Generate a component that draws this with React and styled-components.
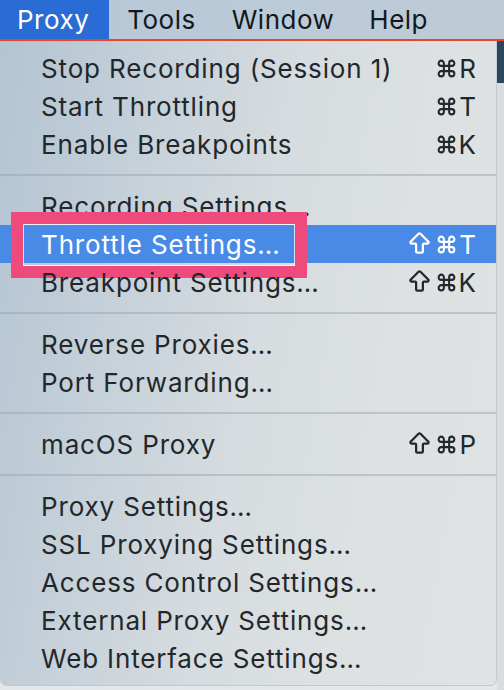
import React from "react";
import styled, { createGlobalStyle } from "styled-components";
import { Command, ArrowBigUp } from "lucide-react";

const Global = createGlobalStyle`
  html, body { margin: 0; padding: 0; }
  body { background: #e4e7e9; font-family: Inter, "Noto Sans", "DejaVu Sans", sans-serif; }
`;

const Page = styled.div`
  width: 504px;
  height: 690px;
  overflow: hidden;
  display: flex;
  flex-direction: column;
  background: #e4e7e9;
`;

const MenuBar = styled.div`
  height: 39px;
  flex: none;
  display: flex;
  align-items: stretch;
  background: linear-gradient(90deg, #b4c6d6 0%, #bccbd8 60%, #bdcad6 100%);
  border-bottom: 2px solid #e8452f;
`;

const MenuTitle = styled.div`
  display: flex;
  align-items: center;
  padding: 0 ${(p) => p.$pr}px 0 ${(p) => p.$pl}px;
  font-size: 26px;
  color: ${(p) => (p.$active ? "#ffffff" : "#13181d")};
  background: ${(p) => (p.$active ? "#2a6cd6" : "transparent")};
  letter-spacing: 0.5px;
`;

const Body = styled.div`
  flex: 1;
  display: flex;
  min-height: 0;
`;

const Menu = styled.div`
  width: 497px;
  flex: none;
  padding: 8px 0 9px;
  box-sizing: border-box;
  height: 645px;
  border-radius: 0 0 7px 7px;
  border-right: 1px solid #c7cbce;
  border-bottom: 1px solid #c4c8cb;
  background: linear-gradient(
    100deg,
    #b3c4d3 0%,
    #c5d0d9 25%,
    #d6dcdf 50%,
    #dde1e2 75%,
    #e0e3e4 100%
  );
  color: #1f2428;
`;

const Side = styled.div`
  flex: 1;
  display: flex;
  flex-direction: column;
`;

const SideDark = styled.div`
  height: 42px;
  background: #2a4760;
`;

const SideLight = styled.div`
  flex: 1;
  background: #d9dde0;
`;

const Row = styled.div`
  position: relative;
  height: 38px;
  display: grid;
  grid-template-columns: 1fr auto;
  align-items: center;
  padding: 0 20px 0 41px;
  font-size: 26px;
  letter-spacing: 0.85px;
  background: ${(p) => (p.$selected ? "#4a8ae7" : "transparent")};
  color: ${(p) => (p.$selected ? "#ffffff" : "#22272b")};
`;

const Label = styled.span`
  white-space: nowrap;
`;

const Shortcut = styled.span`
  display: flex;
  align-items: center;
  letter-spacing: 0;
  font-size: 26px;
`;

const ShiftIcon = styled(ArrowBigUp)`
  margin-right: 3px;
  margin-top: -1px;
`;

const CmdIcon = styled(Command)`
  margin-right: 2px;
`;

const Separator = styled.div`
  height: 24px;
  display: flex;
  align-items: center;
  &::after {
    content: "";
    flex: 1;
    height: 2px;
    background: rgba(150, 160, 166, 0.45);
  }
`;

const Annotation = styled.div`
  position: absolute;
  left: 11px;
  top: -13px;
  width: 296px;
  height: 66px;
  box-sizing: border-box;
  border: 12px solid #ee4a7b;
  box-shadow: inset 0 0 0 1px rgba(255, 255, 255, 0.75);
  pointer-events: none;
`;

const sections = [
  [
    { label: "Stop Recording (Session 1)", keys: ["⌘", "R"] },
    { label: "Start Throttling", keys: ["⌘", "T"] },
    { label: "Enable Breakpoints", keys: ["⌘", "K"] },
  ],
  [
    { label: "Recording Settings…" },
    { label: "Throttle Settings…", keys: ["⇧", "⌘", "T"], selected: true },
    { label: "Breakpoint Settings…", keys: ["⇧", "⌘", "K"] },
  ],
  [{ label: "Reverse Proxies…" }, { label: "Port Forwarding…" }],
  [{ label: "macOS Proxy", keys: ["⇧", "⌘", "P"] }],
  [
    { label: "Proxy Settings…" },
    { label: "SSL Proxying Settings…" },
    { label: "Access Control Settings…" },
    { label: "External Proxy Settings…" },
    { label: "Web Interface Settings…" },
  ],
];

const titles = [
  { t: "Proxy", active: true, pl: 17, pr: 20 },
  { t: "Tools", pl: 18, pr: 18 },
  { t: "Window", pl: 18, pr: 18 },
  { t: "Help", pl: 17, pr: 20 },
];

function Key({ k }) {
  if (k === "⌘") return <CmdIcon size={21} strokeWidth={2.3} aria-label="⌘" />;
  if (k === "⇧") return <ShiftIcon size={27} strokeWidth={2} aria-label="⇧" />;
  return <span>{k}</span>;
}

export default function App() {
  return (
    <Page>
      <Global />
      <MenuBar>
        {titles.map((m) => (
          <MenuTitle key={m.t} $active={m.active} $pl={m.pl} $pr={m.pr}>
            {m.t}
          </MenuTitle>
        ))}
      </MenuBar>
      <Body>
        <Menu>
          {sections.map((sec, si) => (
            <React.Fragment key={si}>
              {si > 0 && <Separator />}
              {sec.map((it) => (
                <Row key={it.label} $selected={it.selected}>
                  <Label>{it.label}</Label>
                  {it.keys ? (
                    <Shortcut>
                      {it.keys.map((k, i) => (
                        <Key key={i} k={k} />
                      ))}
                    </Shortcut>
                  ) : (
                    <span />
                  )}
                  {it.selected && <Annotation />}
                </Row>
              ))}
            </React.Fragment>
          ))}
        </Menu>
        <Side>
          <SideDark />
          <SideLight />
        </Side>
      </Body>
    </Page>
  );
}
